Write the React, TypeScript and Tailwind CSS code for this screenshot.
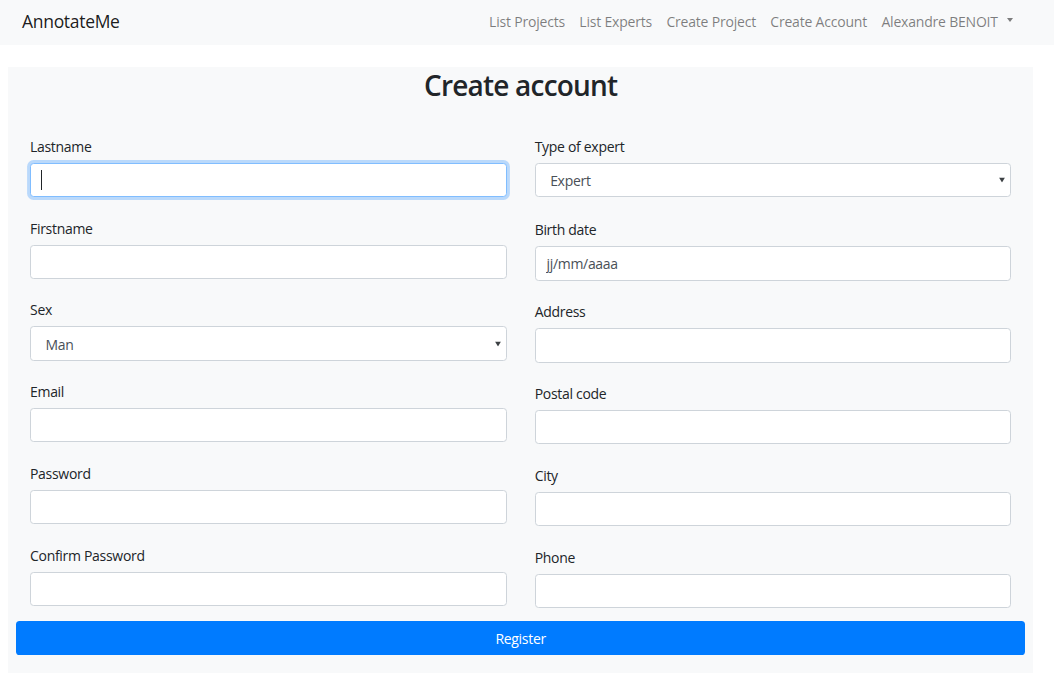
import React from "react";

const font = { fontFamily: '"Open Sans", "Noto Sans", sans-serif' };

const inputBase =
  "block w-full h-[34.4px] rounded-[3.6px] border bg-white px-[10.8px] text-[14px] tracking-[-0.3px] text-[#495057] outline-none";

function Label({ children }: { children: React.ReactNode }) {
  return (
    <label className="block text-[14px] leading-[21.6px] tracking-[-0.3px] text-[#212529] mb-[5.4px]">
      {children}
    </label>
  );
}

function TextField({
  label,
  value,
  focused,
  mb,
}: {
  label: string;
  value?: string;
  focused?: boolean;
  mb: string;
}) {
  return (
    <div className={mb}>
      <Label>{label}</Label>
      <div className="relative">
        <input
          type="text"
          readOnly
          defaultValue={value ?? ""}
          className={
            inputBase +
            (focused
              ? " border-[#80bdff] shadow-[0_0_0_2.9px_rgba(0,123,255,0.25)]"
              : " border-[#ced4da]")
          }
          style={font}
        />
        {focused && (
          <span className="absolute left-[11px] top-[7px] h-[20px] w-px bg-[#212529]" />
        )}
      </div>
    </div>
  );
}

function SelectField({ label, value, mb }: { label: string; value: string; mb: string }) {
  return (
    <div className={mb}>
      <Label>{label}</Label>
      <div className="relative">
        <select
          className={inputBase + " border-[#ced4da] appearance-none pl-[14.5px] pt-[1px]"}
          style={font}
          defaultValue={value}
        >
          <option>{value}</option>
        </select>
        <svg
          className="pointer-events-none absolute right-[6px] top-1/2 -translate-y-1/2"
          width="6"
          height="5"
          viewBox="0 0 6 5"
        >
          <path d="M0 0 H6 L3 5 Z" fill="#3c4043" />
        </svg>
      </div>
    </div>
  );
}

export default function App() {
  const links = ["List Projects", "List Experts", "Create Project", "Create Account"];
  return (
    <div className="min-h-screen w-full bg-white tracking-[-0.3px]" style={font}>
      <nav className="flex h-[45px] items-center justify-between bg-[#f8f9fa] pl-[22px] pr-[34px]">
        <a className="-mt-[3px] text-[17.5px] leading-[27px] text-black/90">AnnotateMe</a>
        <ul className="flex items-center">
          {links.map((l) => (
            <li
              key={l}
              className="-mt-[1px] px-[7.2px] text-[14px] leading-[21.6px] tracking-[-0.2px] text-black/50"
            >
              {l}
            </li>
          ))}
          <li className="-mt-[1px] flex items-center px-[7.2px] text-[14px] leading-[21.6px] tracking-[-0.2px] text-black/50">
            Alexandre BENOIT
            <span className="-mt-[4px] ml-[9px] h-0 w-0 border-x-[3.5px] border-t-[4px] border-x-transparent border-t-black/50" />
          </li>
        </ul>
      </nav>

      <div className="ml-2 mt-[22px] h-[606px] w-[1025.3px] bg-[#f8f9fa] px-2">
        <h2 className="pt-[0.5px] text-center text-[28px] font-semibold leading-[34.5px] tracking-[-0.8px] text-[#212529]">
          Create account
        </h2>

        <div className="mt-[33.8px] grid grid-cols-2">
          <div className="px-[14px]">
            <TextField label="Lastname" focused mb="mb-[20.4px]" />
            <TextField label="Firstname" mb="mb-[20.4px]" />
            <SelectField label="Sex" value="Man" mb="mb-[20.4px]" />
            <TextField label="Email" mb="mb-[20.4px]" />
            <TextField label="Password" mb="mb-[20.4px]" />
            <TextField label="Confirm Password" mb="mb-0" />
          </div>
          <div className="px-[14px]">
            <SelectField label="Type of expert" value="Expert" mb="mb-[22.3px]" />
            <TextField label="Birth date" value="jj/mm/aaaa" mb="mb-[20.4px]" />
            <TextField label="Address" mb="mb-[20.4px]" />
            <TextField label="Postal code" mb="mb-[20.4px]" />
            <TextField label="City" mb="mb-[20.4px]" />
            <TextField label="Phone" mb="mb-0" />
          </div>
        </div>

        <button
          className="mt-[13.5px] block h-[34px] w-full rounded-[3.6px] bg-[#007bff] text-center text-[14px] tracking-[-0.3px] text-white"
          style={font}
        >
          Register
        </button>
      </div>
    </div>
  );
}
